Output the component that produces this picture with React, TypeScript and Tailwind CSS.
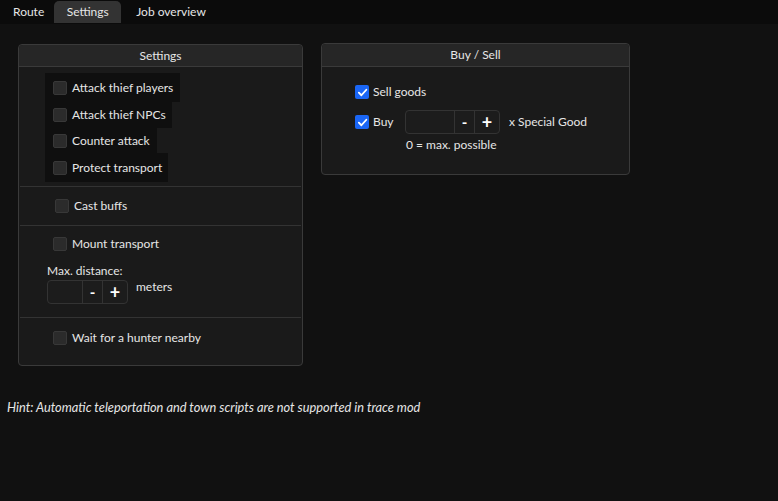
import React from "react";

const font = { fontFamily: "Lato, 'Open Sans', sans-serif" };

function Box({ checked = false }: { checked?: boolean }) {
  if (checked) {
    return (
      <span className="w-[14px] h-[14px] rounded-[2px] bg-[#1a66f5] flex items-center justify-center shrink-0">
        <svg width="11" height="11" viewBox="0 0 12 12">
          <path d="M2 6.2 L4.8 9 L10.2 3" stroke="#fff" strokeWidth="2" fill="none" strokeLinecap="round" strokeLinejoin="round" />
        </svg>
      </span>
    );
  }
  return <span className="w-[14px] h-[14px] rounded-[2px] bg-[#2b2b2b] border border-[#383838] shrink-0" />;
}

function Spin({ inputW }: { inputW: number }) {
  return (
    <div className="flex h-[24px] border border-[#333] rounded-[4px] bg-[#1c1c1c]">
      <div style={{ width: inputW }} className="border-r border-[#333]" />
      <div className="w-[20px] border-r border-[#333] flex items-center justify-center text-white font-bold text-[15px] leading-none">-</div>
      <div className="w-[24px] flex items-center justify-center text-white font-bold text-[18px] leading-none">+</div>
    </div>
  );
}

export default function App() {
  return (
    <div className="w-[778px] h-[501px] bg-[#111111] text-[#e6e6e6] text-[12px] overflow-hidden" style={font}>
      <div className="h-[24px] bg-[#0b0b0b] flex items-start pt-px pl-[5px]">
        <div className="h-[22px] px-[8px] flex items-center">Route</div>
        <div className="h-[22px] w-[67px] ml-[2px] flex items-center justify-center bg-[#333333] rounded-t-[5px]">Settings</div>
        <div className="h-[22px] px-[14px] ml-px flex items-center">Job overview</div>
      </div>
      <div className="flex items-start pt-[20px] pl-[18px] gap-[18px]">
        <div className="w-[285px] h-[322px] border border-[#3a3a3a] rounded-[4px] bg-[#1a1a1a] flex flex-col">
          <div className="h-[22px] bg-[#262626] border-b border-[#3a3a3a] rounded-t-[4px] flex items-center justify-center">Settings</div>
          <div className="pl-[26px] pt-[6px] pb-[4px] flex flex-col items-start">
            <div className="h-[29px] w-[135px] bg-[#0f0f0f] flex items-center gap-[5px] pl-[8px]"><Box />Attack thief players</div>
            <div className="h-[26px] w-[127px] bg-[#0f0f0f] flex items-center gap-[5px] pl-[8px]"><Box />Attack thief NPCs</div>
            <div className="h-[25px] w-[112px] bg-[#0f0f0f] flex items-center gap-[5px] pl-[8px]"><Box />Counter attack</div>
            <div className="h-[29px] w-[123px] bg-[#0f0f0f] flex items-center gap-[5px] pl-[8px]"><Box />Protect transport</div>
          </div>
          <div className="h-px bg-[#333] mx-px" />
          <div className="h-[38px] pl-[36px] flex items-center gap-[5px]"><Box />Cast buffs</div>
          <div className="h-px bg-[#333] mx-px" />
          <div className="pl-[28px] pt-[11px] flex flex-col">
            <div className="pl-[6px] flex items-center gap-[5px] h-[14px]"><Box />Mount transport</div>
            <div className="mt-[13px] h-[14px] leading-[14px]">Max. distance:</div>
            <div className="mt-[2px] flex items-start gap-[8px]">
              <Spin inputW={35} />
              <span className="mt-[-2px]">meters</span>
            </div>
          </div>
          <div className="h-px bg-[#333] mx-px mt-[13px]" />
          <div className="pl-[34px] pt-[11px] flex items-center gap-[5px]"><Box />Wait for a hunter nearby</div>
        </div>
        <div className="w-[309px] h-[132px] mt-[-1px] border border-[#3a3a3a] rounded-[4px] bg-[#1a1a1a] flex flex-col">
          <div className="h-[23px] bg-[#262626] border-b border-[#3a3a3a] rounded-t-[4px] flex items-center justify-center">Buy / Sell</div>
          <div className="pl-[33px] pt-[18px] flex flex-col">
            <div className="flex items-center gap-[4px] h-[14px]"><Box checked />Sell goods</div>
            <div className="mt-[11px] flex items-center">
              <div className="flex items-center gap-[4px] w-[50px]"><Box checked />Buy</div>
              <Spin inputW={49} />
              <span className="ml-[9px]">x Special Good</span>
            </div>
            <div className="pl-[51px] mt-[2px]">0 = max. possible</div>
          </div>
        </div>
      </div>
      <div className="pl-[7px] mt-[32px] italic text-[12.8px]">Hint: Automatic teleportation and town scripts are not supported in trace mod</div>
    </div>
  );
}
